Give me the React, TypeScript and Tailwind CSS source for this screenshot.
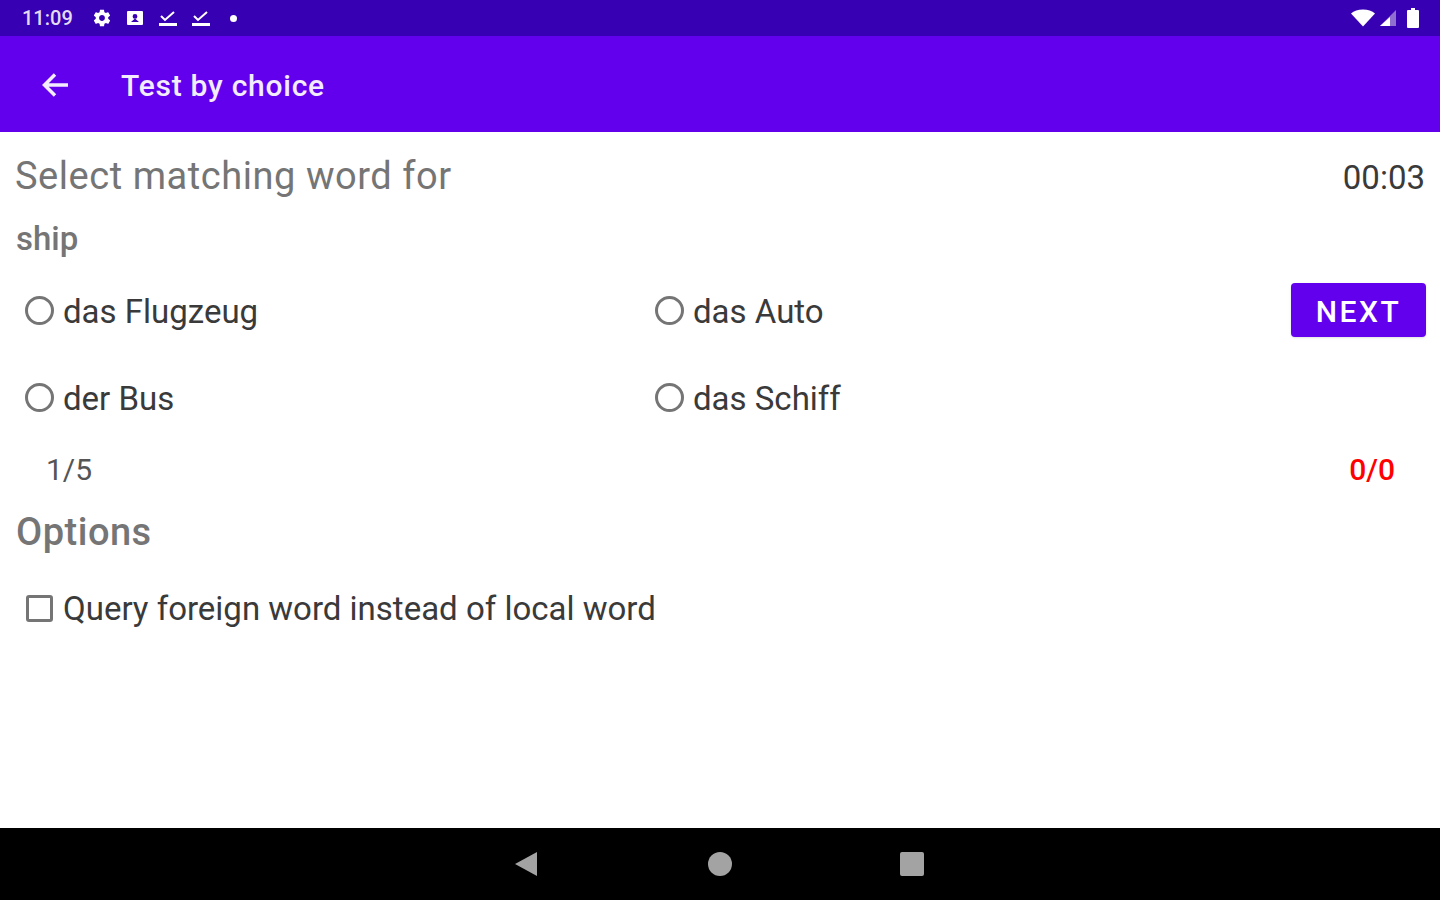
import React from 'react';

const font = { fontFamily: 'Roboto, sans-serif' };

function Radio({ label }: { label: string }) {
  return (
    <div className="flex items-center h-[60px]">
      <span className="ml-[25px] mb-[4px] w-[29px] h-[29px] rounded-full border-[3px] border-[#757575] shrink-0" />
      <span className="ml-[9px] text-[33px] leading-[40px] text-[#3a3a3a]">{label}</span>
    </div>
  );
}

function StatusIcons() {
  return (
    <div className="flex items-center ml-[19px] gap-[13px]">
      <svg width="20" height="20" viewBox="0 0 24 24" fill="#fff">
        <path d="M19.4 13c.04-.3.1-.65.1-1s-.06-.7-.1-1l2.1-1.65c.2-.15.25-.42.13-.64l-2-3.46c-.12-.22-.4-.3-.6-.22l-2.5 1c-.52-.4-1.08-.73-1.7-.98l-.37-2.65C14.4 2.2 14.2 2 14 2h-4c-.25 0-.46.18-.5.42l-.37 2.65c-.6.25-1.17.59-1.7.98l-2.5-1c-.22-.08-.48 0-.6.22l-2 3.46c-.13.22-.07.49.12.64L4.57 11c-.04.32-.07.66-.07 1s.03.68.07 1l-2.11 1.65c-.19.15-.25.42-.12.64l2 3.46c.12.22.39.3.61.22l2.49-1c.52.4 1.08.73 1.69.98l.38 2.65c.03.24.24.42.49.42h4c.25 0 .46-.18.5-.42l.37-2.65c.61-.25 1.17-.59 1.69-.98l2.49 1c.23.09.49 0 .61-.22l2-3.46c.12-.22.07-.49-.12-.64L19.4 13zM12 15.5c-1.93 0-3.5-1.57-3.5-3.5s1.57-3.5 3.5-3.5 3.500 1.57 3.500 3.5-1.57 3.5-3.5 3.5z" />
      </svg>
      <svg width="20" height="20" viewBox="0 0 20 20" fill="#fff">
        <path fillRule="evenodd" d="M3 3h14a1 1 0 0 1 1 1v12a1 1 0 0 1-1 1H3a1 1 0 0 1-1-1V4a1 1 0 0 1 1-1zm7 3a2.400 2.400 0 1 0 0 4.800A2.400 2.400 0 0 0 10 6zm-4 8h8l-4-3.400z" />
      </svg>
      <svg width="20" height="20" viewBox="0 0 20 20" fill="none" stroke="#fff" strokeWidth="2">
        <path d="M3 8l4 4 9-8" />
        <path d="M1 16.500h18" strokeWidth="3" />
      </svg>
      <svg width="20" height="20" viewBox="0 0 20 20" fill="none" stroke="#fff" strokeWidth="2">
        <path d="M3 8l4 4 9-8" />
        <path d="M1 16.500h18" strokeWidth="3" />
      </svg>
      <span className="w-[7px] h-[7px] rounded-full bg-white ml-[6px]" />
    </div>
  );
}

export default function App() {
  return (
    <div className="w-[1440px] h-[900px] flex flex-col bg-white overflow-hidden" style={font}>
      {/* status bar */}
      <div className="h-[36px] bg-[#3700b3] flex items-center pl-[22px] pr-[20px] shrink-0">
        <span className="text-[20px] font-medium text-[#e4dcf5]">11:09</span>
        <StatusIcons />
        <div className="ml-auto flex items-center gap-[3px]">
          <svg width="26" height="20" viewBox="0 0 26 20" fill="#fff">
            <path d="M1 5.500C4 3 8 1.500 13 1.500S22 3 25 5.500L13 18.500z" />
          </svg>
          <svg width="18" height="18" viewBox="0 0 18 18">
            <path d="M17 1v16H1z" fill="#8f6fd0" />
            <path d="M11 8v9H1z" fill="#fff" />
          </svg>
          <svg width="14" height="20" viewBox="0 0 14 20" fill="#fff" className="ml-[6px]">
            <path d="M5 0h4v2h3a1 1 0 0 1 1 1v16a1 1 0 0 1-1 1H2a1 1 0 0 1-1-1V3a1 1 0 0 1 1-1h3z" />
          </svg>
        </div>
      </div>

      {/* toolbar */}
      <div className="h-[96px] bg-[#6200ee] flex items-center shrink-0">
        <svg className="ml-[42px] mt-[2px]" width="26" height="26" viewBox="0 0 26 26" fill="none" stroke="#f3ecff" strokeWidth="3.500">
          <path d="M26 13H3M13 2.500L2.500 13 13 23.500" />
        </svg>
        <span className="ml-[53px] mt-[2px] text-[30px] tracking-[0.75px] font-medium text-[#f3ecff]">Test by choice</span>
      </div>

      {/* content */}
      <div className="flex-1">
        <div className="flex items-start justify-between pl-[16px] pr-[15px] pt-[21px]">
          <span className="text-[38px] leading-[46px] tracking-[0.55px] text-[#757575] -ml-px">Select matching word for</span>
          <span className="text-[33px] leading-[46px] text-[#3a3a3a] mt-[2px]">00:03</span>
        </div>
        <div className="pl-[16px] mt-[17px] text-[33px] leading-[42px] font-medium text-[#757575]">ship</div>

        <div className="flex mt-[22px]">
          <div className="w-[630px]">
            <Radio label="das Flugzeug" />
            <div className="h-[27px]" />
            <Radio label="der Bus" />
          </div>
          <div className="flex-1">
            <Radio label="das Auto" />
            <div className="h-[27px]" />
            <Radio label="das Schiff" />
          </div>
          <div className="pr-[14px] pt-[1px]">
            <button className="w-[135px] h-[54px] pt-[2px] bg-[#6200ee] rounded-[4px] text-white text-[30px] font-medium tracking-[2.500px] shadow-sm">NEXT</button>
          </div>
        </div>

        <div className="flex justify-between pl-[46px] pr-[45px] mt-[21px] text-[30px] leading-[40px]">
          <span className="text-[#555555]">1/5</span>
          <span className="text-[#ff0000] font-medium">0/0</span>
        </div>

        <div className="pl-[16px] mt-[19px] text-[38px] leading-[46px] tracking-[0.5px] font-medium text-[#757575]">Options</div>

        <div className="flex items-center mt-[33px] h-[40px]">
          <span className="ml-[26px] w-[27px] h-[27px] rounded-[3px] border-[3px] border-[#757575] shrink-0" />
          <span className="ml-[10px] mt-[2px] text-[33px] leading-[40px] text-[#3a3a3a]">Query foreign word instead of local word</span>
        </div>
      </div>

      {/* nav bar */}
      <div className="h-[72px] bg-black flex items-center justify-center gap-[168px] shrink-0">
        <svg width="24" height="26" viewBox="0 0 24 26" fill="#a3a3a3" className="-translate-x-[2px]"><path d="M23 1v24L1 13z" /></svg>
        <span className="w-[24px] h-[24px] rounded-full bg-[#a3a3a3]" />
        <span className="w-[24px] h-[24px] rounded-[2px] bg-[#a3a3a3]" />
      </div>
    </div>
  );
}
